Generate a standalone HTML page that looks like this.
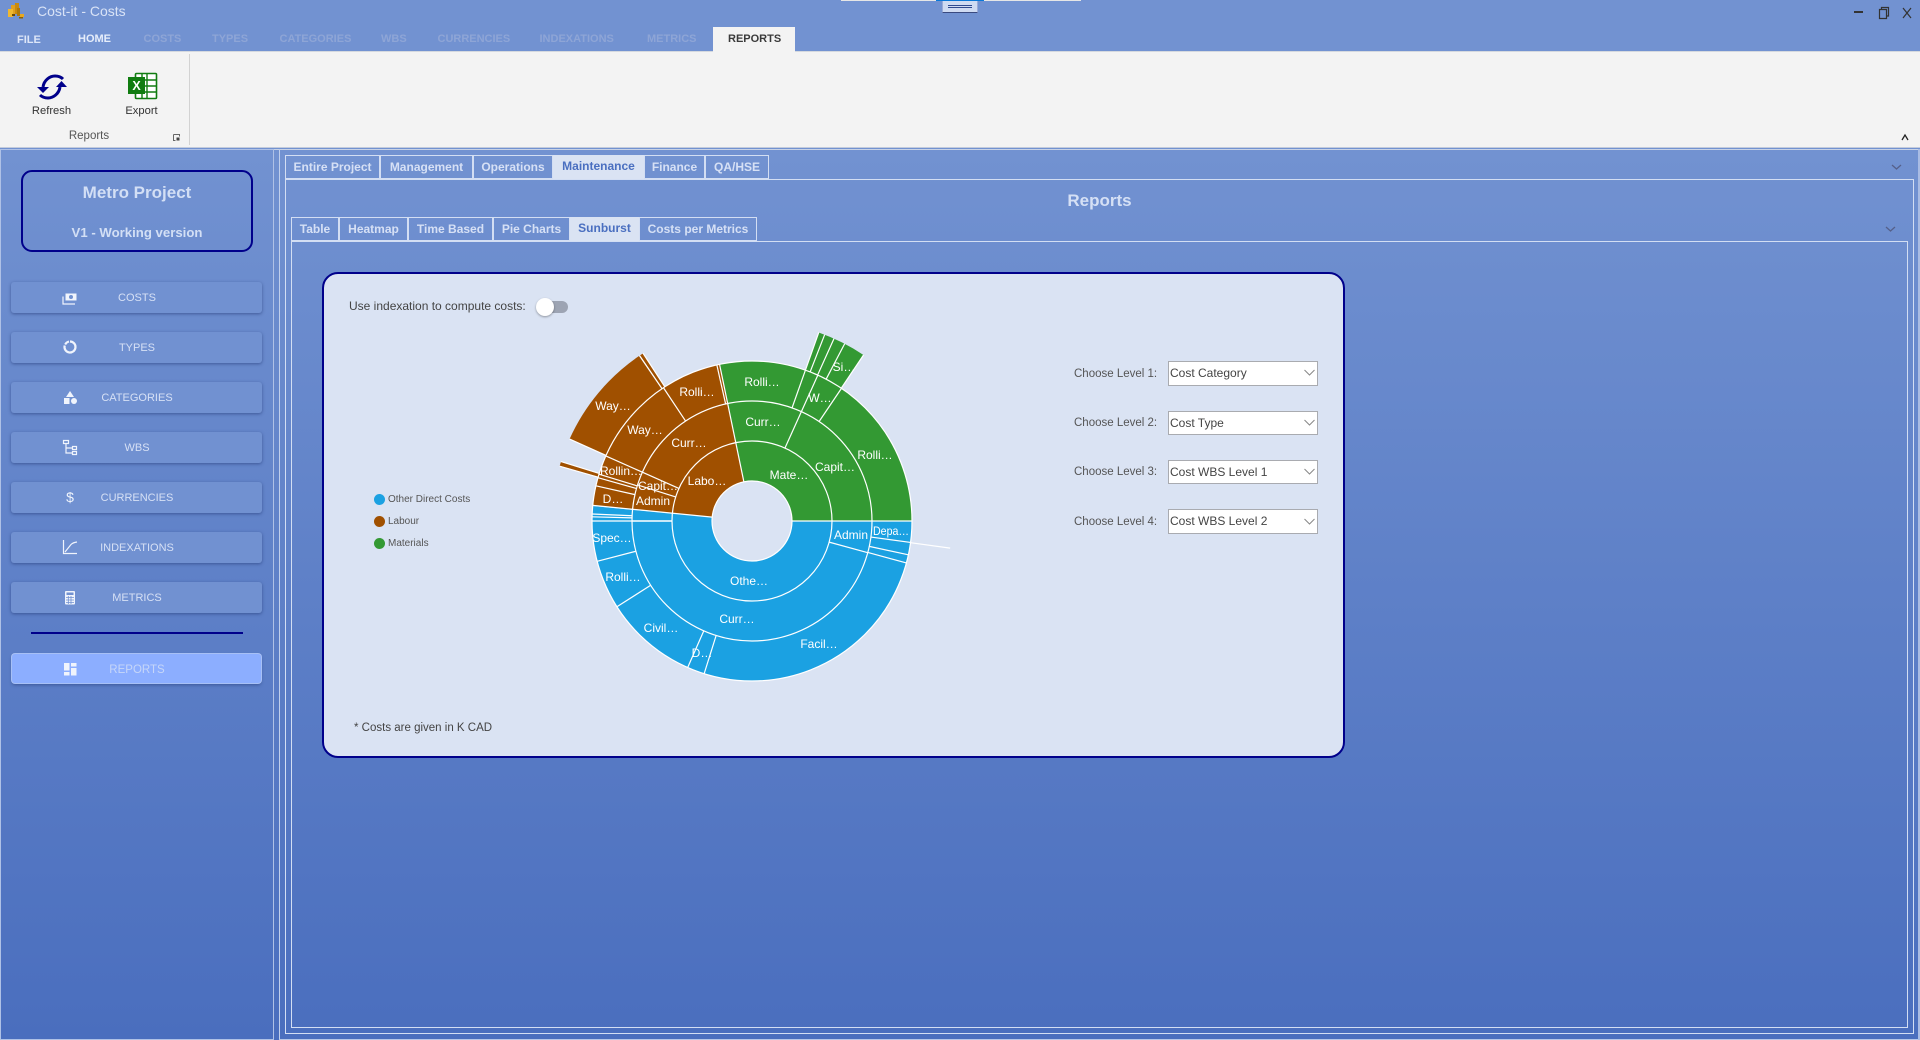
<!DOCTYPE html>
<html lang="en">
<head>
<meta charset="utf-8">
<title>Cost-it - Costs</title>
<style>
html,body{margin:0;padding:0;width:1920px;height:1040px;overflow:hidden}
body{position:relative;background:#7292D1;font-family:"Liberation Sans",sans-serif;font-size:12px;color:#333}
.a{position:absolute;box-sizing:border-box}
.c{position:absolute;box-sizing:border-box;text-align:center;white-space:nowrap}
.rt{position:absolute;top:32px;font-size:11px;font-weight:bold;line-height:14px;color:#8EA5D6;white-space:nowrap}
.tab{position:absolute;box-sizing:border-box;border:1px solid #D3DEF3;border-left-width:1.5px;height:24px;line-height:22.500px;text-align:center;font-weight:bold;font-size:12px;color:#D6E0F5;white-space:nowrap}
.tab.on{background:#DAE3F3;color:#4A6FC0;border-color:#DAE3F3;line-height:20.500px}
.nav{position:absolute;left:11px;width:251px;height:31px;background:#7191D1;border-radius:3px;box-shadow:0 1px 3px rgba(30,50,110,.55);text-align:center;line-height:32.500px;font-size:11px;color:#D6E0F5;padding-left:1px;box-sizing:border-box}
.nav.on{background:#8CAEFF;box-shadow:0 0 0 1px #A7C0F5,0 2px 3px rgba(30,50,110,.5);color:#C6D6F8;font-size:11.500px}
.lbl{position:absolute;left:1074px;font-size:11.500px;line-height:14px;color:#555;white-space:nowrap}
.dd{position:absolute;left:1168px;width:150px;height:25px;background:#fff;border:1px solid #A9ABB0;box-sizing:border-box;line-height:23px;padding-left:1px;font-size:12px;color:#444;white-space:nowrap}
svg{position:absolute;left:0;top:0}
.sb text{font-family:"Liberation Sans",sans-serif;font-size:12px;fill:#fff;text-anchor:middle;dominant-baseline:central}
</style>
</head>
<body>
<!-- main gradient -->
<div class="a" style="left:0;top:149px;width:1920px;height:891px;background:linear-gradient(#7292D1,#4A6EBE)"></div>

<!-- title bar -->
<svg width="24" height="20" style="left:6px;top:2px">
  <rect x="5" y="3" width="5" height="9" fill="#E0A020"/><rect x="9" y="1" width="4" height="11" fill="#C88A10"/><rect x="2" y="7" width="5" height="8" fill="#F0B830"/><rect x="11" y="6" width="3" height="8" fill="#B07808"/><rect x="14" y="12" width="4" height="3" fill="#E8A820"/><rect x="13" y="15" width="4" height="1.500" fill="#8A6008"/><rect x="6" y="12" width="3" height="2" fill="#6B4A06"/>
</svg>
<div class="a" style="left:37px;top:3px;font-size:14px;line-height:16px;color:#D9E3F6;font-weight:normal;white-space:nowrap">Cost-it - Costs</div>

<div class="a" style="left:841px;top:0;width:240px;height:1px;background:#E6E6E6"></div>
<div class="a" style="left:936px;top:0;width:48px;height:1px;background:#0A78D8"></div>
<div class="a" style="left:942px;top:1px;width:36px;height:12px;background:#CFDBF2;border-bottom:1px solid #3A4A80;border-left:1px solid #9AABD8;border-right:1px solid #9AABD8"></div>
<div class="a" style="left:948px;top:5px;width:24px;height:1px;background:#2F4A90"></div>
<div class="a" style="left:948px;top:7px;width:24px;height:1px;background:#2F4A90"></div>

<svg width="70" height="20" style="left:1850px;top:3px">
  <rect x="4" y="8" width="9" height="2" fill="#333"/>
  <path d="M29.500 6.500h7v9h-7zM31.500 6V4.500h7v8.500h-2" fill="none" stroke="#333" stroke-width="1.200"/>
  <path d="M53 5l8 10M61 5l-8 10" stroke="#333" stroke-width="1.200"/>
</svg>

<!-- ribbon tabs -->
<div class="rt" style="left:17px;top:33px;color:#DDE6F8">FILE</div>
<div class="rt" style="left:78px;color:#E6EDFA">HOME</div>
<div class="rt" style="left:143.500px">COSTS</div>
<div class="rt" style="left:212px">TYPES</div>
<div class="rt" style="left:279.500px">CATEGORIES</div>
<div class="rt" style="left:381px">WBS</div>
<div class="rt" style="left:437.500px">CURRENCIES</div>
<div class="rt" style="left:539.500px">INDEXATIONS</div>
<div class="rt" style="left:647px">METRICS</div>
<div class="a" style="left:713px;top:27px;width:82px;height:25px;background:#F3F3F3"></div>
<div class="rt" style="left:728px;top:32px;color:#3a3a3a">REPORTS</div>

<!-- ribbon -->
<div class="a" style="left:0;top:51px;width:1920px;height:96px;background:#F3F3F3;border-top:1px solid #D5D9DF"></div>
<div class="a" style="left:713px;top:51px;width:82px;height:2px;background:#F3F3F3"></div>
<div class="a" style="left:189px;top:54px;width:1px;height:91px;background:#D2D2D2"></div>
<div class="a" style="left:0;top:147px;width:1920px;height:1px;background:#C4CCDC"></div>
<div class="a" style="left:0;top:148px;width:1920px;height:1px;background:#7292D1"></div>
<div class="a" style="left:0;top:149px;width:1920px;height:1px;background:#C8D2E6"></div>

<svg width="200" height="100" style="left:0;top:51px">
  <g transform="translate(0,-51)">
    <path d="M43 87C44 80 50 76 55 76C58 76 61 77 63 79" fill="none" stroke="#00008B" stroke-width="3"/>
    <path d="M60 87C59 94 53 98 48 98C45 98 42 97 40 95" fill="none" stroke="#00008B" stroke-width="3"/>
    <path d="M37 87H49L43 93Z" fill="#00008B"/>
    <path d="M56 87H67L61.500 81Z" fill="#00008B"/>
    <rect x="135.500" y="73.500" width="21" height="25" rx="1" fill="#fff" stroke="#107C10" stroke-width="1.600"/>
    <path d="M147 74V98M136 80H156M136 86H156M136 92H156M142 74V98" stroke="#107C10" stroke-width="1.400" fill="none"/>
    <rect x="128" y="77" width="17" height="17" fill="#107C10"/>
    <text x="136.500" y="90" font-family="Liberation Sans" font-size="12.500" font-weight="bold" fill="#fff" text-anchor="middle">X</text>
    <path d="M173.500 134.500h6v2M173.500 134.500v6h2" fill="none" stroke="#666" stroke-width="1"/>
    <rect x="176.500" y="137.500" width="3" height="3" fill="#444"/>
  </g>
</svg>
<div class="c" style="left:21.500px;top:103.500px;width:60px;font-size:11.200px;line-height:15px;color:#333">Refresh</div>
<div class="c" style="left:111.500px;top:103.500px;width:60px;font-size:11.200px;line-height:15px;color:#333">Export</div>
<div class="c" style="left:59px;top:129px;width:60px;line-height:14px;color:#555;font-size:11.500px">Reports</div>
<svg width="12" height="8" style="left:1899px;top:133px"><path d="M3 7l3-5 3 5" fill="none" stroke="#222" stroke-width="1.300"/></svg>

<!-- frame lines -->
<div class="a" style="left:0;top:149px;width:274px;height:891px;border:1.500px solid #AFC1E6;border-bottom-width:1px"></div>
<div class="a" style="left:279px;top:149px;width:641px;height:891px;border-left:1.500px solid #C0CFEC"></div>
<div class="a" style="left:279px;top:1039px;width:1641px;height:1px;background:#B5C6E8"></div>
<div class="a" style="left:1918px;top:149px;width:2px;height:891px;background:#A9BCE4"></div>
<div class="a" style="left:285px;top:179px;width:1629px;height:855px;border:1.300px solid #D3DEF3"></div>
<div class="a" style="left:291px;top:241px;width:1617px;height:787px;border:1.300px solid #D3DEF3"></div>

<!-- sidebar -->
<div class="a" style="left:21px;top:170px;width:232px;height:82px;border:2px solid #00008B;border-radius:11px"></div>
<div class="c" style="left:21px;top:182px;width:232px;font-size:17px;font-weight:bold;line-height:22px;color:#D3DFF5">Metro Project</div>
<div class="c" style="left:21px;top:224px;width:232px;font-size:13.200px;font-weight:bold;line-height:17px;color:#D3DFF5">V1 - Working version</div>

<div class="nav" style="top:282px">COSTS</div>
<div class="nav" style="top:332px">TYPES</div>
<div class="nav" style="top:382px">CATEGORIES</div>
<div class="nav" style="top:432px">WBS</div>
<div class="nav" style="top:482px">CURRENCIES</div>
<div class="nav" style="top:532px">INDEXATIONS</div>
<div class="nav" style="top:582px">METRICS</div>
<div class="a" style="left:31px;top:632px;width:212px;height:2px;background:#00008B"></div>
<div class="nav on" style="top:654px;left:12px;width:249px;height:29px;line-height:32px">REPORTS</div>

<svg width="100" height="420" style="left:20px;top:280px" fill="#F0F4FC">
  <g transform="translate(-20,-280)">
    <!-- costs -->
    <rect x="65.500" y="293.500" width="11" height="7" fill="#F0F4FC"/><circle cx="71" cy="297" r="2" fill="#7191D1"/>
    <path d="M63 296.500V304H75" fill="none" stroke="#F0F4FC" stroke-width="1.200"/>
    <!-- types -->
    <path d="M70 341.500A5.500 5.500 0 1 1 64.700 345.500M65.200 344.500A5.500 5.500 0 0 1 69 341.600" fill="none" stroke="#F0F4FC" stroke-width="2.200"/>
    <!-- categories -->
    <path d="M70 391L74 397H66Z"/><rect x="64" y="398" width="5.500" height="6"/><circle cx="74" cy="401" r="3"/>
    <!-- wbs -->
    <path d="M63.500 440.500h5v3h-5zM72.500 446.500h4v3h-4zM72.500 451.500h4v3h-4z" fill="none" stroke="#F0F4FC" stroke-width="1.200"/>
    <path d="M66 444v9h6M66 448h6" fill="none" stroke="#F0F4FC" stroke-width="1.200"/>
    <!-- indexations -->
    <path d="M63.500 540v13.500H77" fill="none" stroke="#F0F4FC" stroke-width="1.200"/>
    <path d="M65 552L71 544.500Q73 542.500 77 542" fill="none" stroke="#F0F4FC" stroke-width="1.200"/>
    <!-- metrics -->
    <rect x="65" y="591" width="10" height="13.500" rx="1"/>
    <rect x="66.500" y="592.500" width="7" height="2.500" fill="#7191D1"/>
    <path d="M66 597.500h8M66 600h8M66 602.500h8M68.300 596v8M71 596v8" stroke="#7191D1" stroke-width=".8"/>
    <!-- reports -->
    <rect x="64" y="663" width="5.500" height="7.500"/><rect x="64" y="672" width="5.500" height="3.500"/><rect x="71" y="663" width="5.500" height="3.500"/><rect x="71" y="668" width="5.500" height="7.500"/>
  </g>
  <text x="50" y="222" font-family="Liberation Sans" font-size="14" text-anchor="middle" fill="#F0F4FC">$</text>
</svg>

<!-- top tabs -->
<div class="tab" style="left:285px;top:155px;width:95px">Entire Project</div>
<div class="tab" style="left:380px;top:155px;width:93px">Management</div>
<div class="tab" style="left:473px;top:155px;width:80px">Operations</div>
<div class="tab on" style="left:553px;top:155px;width:91px">Maintenance</div>
<div class="tab" style="left:644px;top:155px;width:61px">Finance</div>
<div class="tab" style="left:705px;top:155px;width:64px">QA/HSE</div>

<div class="c" style="left:285px;top:190px;width:1629px;font-size:17px;font-weight:bold;line-height:22px;color:#D5E0F5">Reports</div>

<!-- sub tabs -->
<div class="tab" style="left:291px;top:217px;width:48px">Table</div>
<div class="tab" style="left:339px;top:217px;width:69px">Heatmap</div>
<div class="tab" style="left:408px;top:217px;width:85px">Time Based</div>
<div class="tab" style="left:493px;top:217px;width:77px">Pie Charts</div>
<div class="tab on" style="left:570px;top:217px;width:69px">Sunburst</div>
<div class="tab" style="left:639px;top:217px;width:118px">Costs per Metrics</div>

<svg width="11" height="7" style="left:1891px;top:164px"><path d="M1 1l4.500 4 4.500-4" fill="none" stroke="#55608A" stroke-width="1.300"/></svg>
<svg width="11" height="7" style="left:1885px;top:226px"><path d="M1 1l4.500 4 4.500-4" fill="none" stroke="#55608A" stroke-width="1.300"/></svg>

<!-- card -->
<div class="a" style="left:322px;top:272px;width:1023px;height:486px;background:#DAE3F3;border:2.500px solid #00008B;border-radius:16px"></div>

<div class="a" style="left:349px;top:299px;font-size:12px;line-height:14px;color:#444;white-space:nowrap">Use indexation to compute costs:</div>
<div class="a" style="left:540px;top:301px;width:28px;height:12px;background:#9DA4B3;border-radius:6px"></div>
<div class="a" style="left:536px;top:298px;width:18px;height:18px;background:#fff;border-radius:50%;box-shadow:0 1px 2px rgba(0,0,0,.35)"></div>

<!-- legend -->
<div class="a" style="left:374px;top:494px;width:11px;height:11px;border-radius:50%;background:#1BA1E2"></div>
<div class="a" style="left:374px;top:516px;width:11px;height:11px;border-radius:50%;background:#A05000"></div>
<div class="a" style="left:374px;top:538px;width:11px;height:11px;border-radius:50%;background:#339933"></div>
<div class="a" style="left:388px;top:494px;font-size:10px;line-height:12px;color:#555;white-space:nowrap">Other Direct Costs</div>
<div class="a" style="left:388px;top:516px;font-size:10px;line-height:12px;color:#555;white-space:nowrap">Labour</div>
<div class="a" style="left:388px;top:538px;font-size:10px;line-height:12px;color:#555;white-space:nowrap">Materials</div>

<!-- sunburst -->
<svg class="sb" width="1920" height="1040">
  <g transform="translate(752,521)" fill="none">
    <circle r="100" pathLength="360" stroke="#339933" stroke-width="120" stroke-dasharray="101.700 360" transform="rotate(-101.700)"/>
    <circle r="100" pathLength="360" stroke="#A05000" stroke-width="120" stroke-dasharray="72.700 360" transform="rotate(-174.400)"/>
    <circle r="100" pathLength="360" stroke="#1BA1E2" stroke-width="120" stroke-dasharray="185.600 360" transform="rotate(0)"/>
    <!-- ring 4 -->
    <circle r="180" pathLength="360" stroke="#339933" stroke-width="40" stroke-dasharray="14.400 360" transform="rotate(-70.500)"/>
    <circle r="180" pathLength="360" stroke="#A05000" stroke-width="40" stroke-dasharray="31.400 360" transform="rotate(-155.800)"/>
    <circle r="180" pathLength="360" stroke="#A05000" stroke-width="40" stroke-dasharray="1 360" transform="rotate(-124.100)"/>
    <circle r="180" pathLength="360" stroke="#A05000" stroke-width="40" stroke-dasharray="1.200 360" transform="rotate(-164)"/>
    <!-- ring circles -->
    <g stroke="#fff" stroke-width="1.200">
      <circle r="40"/><circle r="80"/><circle r="120"/><circle r="160"/>
    </g>
    <!-- radial lines -->
    <g stroke="#fff" stroke-width="1.200">
      <line x1="40" x2="160"/>
      <line x1="40" x2="160" transform="rotate(-101.700)"/>
      <line x1="40" x2="160" transform="rotate(-174.400)"/>
      <!-- ring 2 -->
      <line x1="80" x2="120" transform="rotate(-65.700)"/>
      <line x1="80" x2="120" transform="rotate(-156)"/>
      <line x1="80" x2="120" transform="rotate(-162.500)"/>
      <line x1="80" x2="120" stroke-width="1.500" transform="rotate(-180)"/>
      <line x1="80" x2="120" transform="rotate(-344.700)"/>
      <!-- ring 3 -->
      <line x1="120" x2="160" transform="rotate(-56)"/>
      <line x1="120" x2="160" transform="rotate(-65.700)"/>
      <line x1="120" x2="160" transform="rotate(-70.500)"/>
      <line x1="120" x2="160" transform="rotate(-102.700)"/>
      <line x1="120" x2="160" transform="rotate(-123.600)"/>
      <line x1="120" x2="160" transform="rotate(-156)"/>
      <line x1="120" x2="160" transform="rotate(-163)"/>
      <line x1="120" x2="160" transform="rotate(-164.300)"/>
      <line x1="120" x2="160" transform="rotate(-167.300)"/>
      <line x1="120" x2="160" transform="rotate(-177.500)"/>
      <line x1="120" x2="160" transform="rotate(-178.500)"/>
      <line x1="120" x2="160" transform="rotate(-180)"/>
      <line x1="120" x2="160" transform="rotate(-194.600)"/>
      <line x1="120" x2="160" transform="rotate(-212.400)"/>
      <line x1="120" x2="160" transform="rotate(-246.300)"/>
      <line x1="120" x2="160" transform="rotate(-252.600)"/>
      <line x1="120" x2="160" transform="rotate(-344.800)"/>
      <line x1="120" x2="160" transform="rotate(-347.800)"/>
      <line x1="120" x2="160" transform="rotate(-352.300)"/>
      <!-- ring 4 -->
      <line x1="160" x2="200" transform="rotate(-56.100)"/>
      <line x1="160" x2="200" transform="rotate(-62.400)"/>
      <line x1="160" x2="200" transform="rotate(-65.800)"/>
      <line x1="160" x2="200" transform="rotate(-68.700)"/>
      <line x1="160" x2="200" transform="rotate(-70.500)"/>
      <line x1="160" x2="200" transform="rotate(-123)"/>
      <line x1="160" x2="200" transform="rotate(-124.200)"/>
      <line x1="160" x2="200" transform="rotate(-155.800)"/>
      <line x1="160" x2="200" transform="rotate(-162.700)"/>
      <line x1="160" x2="200" transform="rotate(-164.100)"/>
      <line x1="160" x2="200" transform="rotate(-352.200)"/>
    </g>
  </g>
  <g>
    <text x="613" y="406">Way…</text>
    <text x="645" y="430">Way…</text>
    <text x="697" y="392">Rolli…</text>
    <text x="762" y="382">Rolli…</text>
    <text x="689" y="443">Curr…</text>
    <text x="763" y="422">Curr…</text>
    <text x="707" y="481">Labo…</text>
    <text x="789" y="475">Mate…</text>
    <text x="835" y="467">Capit…</text>
    <text x="875" y="455">Rolli…</text>
    <text x="844" y="367">Si…</text>
    <text x="820" y="398">W…</text>
    <text x="621" y="471">Rollin…</text>
    <text x="658" y="486">Capit…</text>
    <text x="653" y="501">Admin</text>
    <text x="613" y="499">D…</text>
    <text x="612" y="538">Spec…</text>
    <text x="623" y="577">Rolli…</text>
    <text x="661" y="628">Civil…</text>
    <text x="702" y="653">D…</text>
    <text x="737" y="619">Curr…</text>
    <text x="749" y="581">Othe…</text>
    <text x="819" y="644">Facil…</text>
    <text x="851" y="535">Admin</text>
    <text x="891" y="531" textLength="36" lengthAdjust="spacingAndGlyphs">Depa…</text>
  </g>
</svg>

<div class="a" style="left:354px;top:721px;font-size:11.500px;line-height:14px;color:#444;white-space:nowrap">* Costs are given in K CAD</div>

<!-- dropdowns -->
<div class="lbl" style="top:367px">Choose Level 1:</div>
<div class="lbl" style="top:416px">Choose Level 2:</div>
<div class="lbl" style="top:465px">Choose Level 3:</div>
<div class="lbl" style="top:515px">Choose Level 4:</div>
<div class="dd" style="top:361px">Cost Category</div>
<div class="dd" style="top:411px;height:24px">Cost Type</div>
<div class="dd" style="top:460px;height:24px">Cost WBS Level 1</div>
<div class="dd" style="top:509px">Cost WBS Level 2</div>
<svg width="1920" height="1040" style="pointer-events:none">
  <g fill="none" stroke="#888" stroke-width="1">
    <path d="M1304.500 370l5 5 5-5"/>
    <path d="M1304.500 420l5 5 5-5"/>
    <path d="M1304.500 469l5 5 5-5"/>
    <path d="M1304.500 519l5 5 5-5"/>
  </g>
</svg>
</body>
</html>
